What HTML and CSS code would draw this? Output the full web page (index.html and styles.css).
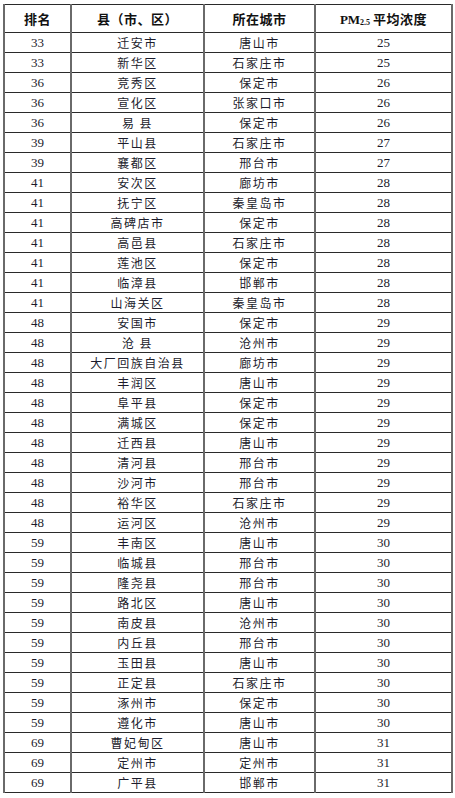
FILE: index.html
```html
<!DOCTYPE html>
<html lang="zh">
<head>
<meta charset="utf-8">
<link rel="stylesheet" href="styles.css">
</head>
<body>
<table class="rank">
<colgroup><col class="c1"><col class="c2"><col class="c3"><col class="c4"></colgroup>
<thead>
<tr><th>排名</th><th>县（市、区）</th><th>所在城市</th><th><span class="pm">PM<sub>2.5</sub></span>平均浓度</th></tr>
</thead>
<tbody>
<tr><td class="n">33</td><td>迁安市</td><td>唐山市</td><td class="n">25</td></tr>
<tr><td class="n">33</td><td>新华区</td><td>石家庄市</td><td class="n">25</td></tr>
<tr><td class="n">36</td><td>竞秀区</td><td>保定市</td><td class="n">26</td></tr>
<tr><td class="n">36</td><td>宣化区</td><td>张家口市</td><td class="n">26</td></tr>
<tr><td class="n">36</td><td>易 县</td><td>保定市</td><td class="n">26</td></tr>
<tr><td class="n">39</td><td>平山县</td><td>石家庄市</td><td class="n">27</td></tr>
<tr><td class="n">39</td><td>襄都区</td><td>邢台市</td><td class="n">27</td></tr>
<tr><td class="n">41</td><td>安次区</td><td>廊坊市</td><td class="n">28</td></tr>
<tr><td class="n">41</td><td>抚宁区</td><td>秦皇岛市</td><td class="n">28</td></tr>
<tr><td class="n">41</td><td>高碑店市</td><td>保定市</td><td class="n">28</td></tr>
<tr><td class="n">41</td><td>高邑县</td><td>石家庄市</td><td class="n">28</td></tr>
<tr><td class="n">41</td><td>莲池区</td><td>保定市</td><td class="n">28</td></tr>
<tr><td class="n">41</td><td>临漳县</td><td>邯郸市</td><td class="n">28</td></tr>
<tr><td class="n">41</td><td>山海关区</td><td>秦皇岛市</td><td class="n">28</td></tr>
<tr><td class="n">48</td><td>安国市</td><td>保定市</td><td class="n">29</td></tr>
<tr><td class="n">48</td><td>沧 县</td><td>沧州市</td><td class="n">29</td></tr>
<tr><td class="n">48</td><td>大厂回族自治县</td><td>廊坊市</td><td class="n">29</td></tr>
<tr><td class="n">48</td><td>丰润区</td><td>唐山市</td><td class="n">29</td></tr>
<tr><td class="n">48</td><td>阜平县</td><td>保定市</td><td class="n">29</td></tr>
<tr><td class="n">48</td><td>满城区</td><td>保定市</td><td class="n">29</td></tr>
<tr><td class="n">48</td><td>迁西县</td><td>唐山市</td><td class="n">29</td></tr>
<tr><td class="n">48</td><td>清河县</td><td>邢台市</td><td class="n">29</td></tr>
<tr><td class="n">48</td><td>沙河市</td><td>邢台市</td><td class="n">29</td></tr>
<tr><td class="n">48</td><td>裕华区</td><td>石家庄市</td><td class="n">29</td></tr>
<tr><td class="n">48</td><td>运河区</td><td>沧州市</td><td class="n">29</td></tr>
<tr><td class="n">59</td><td>丰南区</td><td>唐山市</td><td class="n">30</td></tr>
<tr><td class="n">59</td><td>临城县</td><td>邢台市</td><td class="n">30</td></tr>
<tr><td class="n">59</td><td>隆尧县</td><td>邢台市</td><td class="n">30</td></tr>
<tr><td class="n">59</td><td>路北区</td><td>唐山市</td><td class="n">30</td></tr>
<tr><td class="n">59</td><td>南皮县</td><td>沧州市</td><td class="n">30</td></tr>
<tr><td class="n">59</td><td>内丘县</td><td>邢台市</td><td class="n">30</td></tr>
<tr><td class="n">59</td><td>玉田县</td><td>唐山市</td><td class="n">30</td></tr>
<tr><td class="n">59</td><td>正定县</td><td>石家庄市</td><td class="n">30</td></tr>
<tr><td class="n">59</td><td>涿州市</td><td>保定市</td><td class="n">30</td></tr>
<tr><td class="n">59</td><td>遵化市</td><td>唐山市</td><td class="n">30</td></tr>
<tr><td class="n">69</td><td>曹妃甸区</td><td>唐山市</td><td class="n">31</td></tr>
<tr><td class="n">69</td><td>定州市</td><td>定州市</td><td class="n">31</td></tr>
<tr><td class="n">69</td><td>广平县</td><td>邯郸市</td><td class="n">31</td></tr>
</tbody>
</table>
</body>
</html>
```

FILE: styles.css
```css
html, body {
  margin: 0;
  padding: 0;
  background: #fff;
}
body {
  padding: 4px 0 0 3px;
  font-family: "Liberation Serif", "Noto Sans CJK SC", serif;
  color: #1c1c2c;
}
.rank {
  border-collapse: collapse;
  table-layout: fixed;
  width: 448px;
}
.c1 { width: 67px; }
.c2 { width: 133px; }
.c3 { width: 111px; }
.c4 { width: 137px; }
.rank th, .rank td {
  padding: 0;
  text-align: center;
  border-top: 1px solid #2a2a2a;
  border-bottom: 1px solid #2a2a2a;
  border-left: 2px solid #6a6a6a;
  border-right: 2px solid #6a6a6a;
  overflow: hidden;
  white-space: nowrap;
}
.rank th {
  height: 27px;
  font-family: "Liberation Serif", "Noto Sans CJK SC", serif;
  font-weight: 700;
  font-size: 13px;
  color: #111;
  letter-spacing: 0.5px;
}
.rank td {
  height: 19px;
  font-family: "Noto Sans CJK SC", sans-serif;
  font-size: 12px;
  letter-spacing: 1.5px;
  line-height: 19px;
}
.rank td.n {
  font-family: "Liberation Serif", serif;
  font-size: 13px;
  letter-spacing: 0;
}
.pm {
  font-family: "Liberation Serif", serif;
  letter-spacing: 0;
  margin-right: 3px;
}
.pm sub {
  font-size: 8px;
  vertical-align: -1px;
}
```
